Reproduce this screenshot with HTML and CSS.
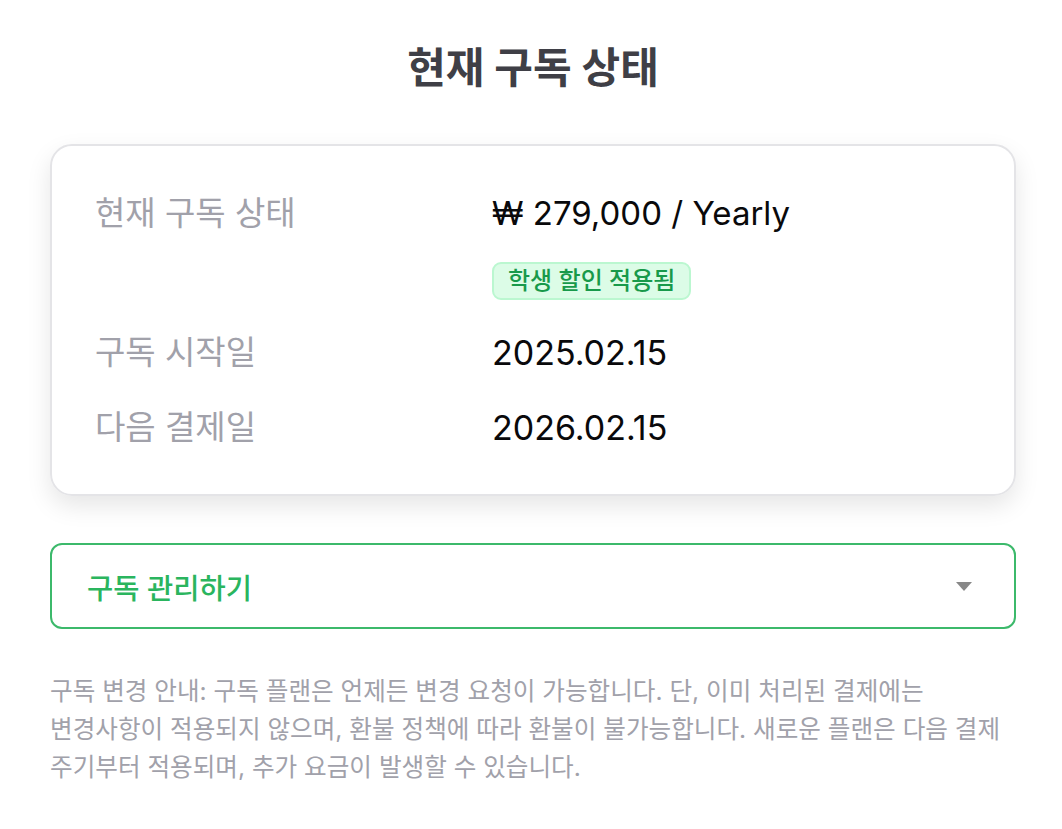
FILE: index.html
```html
<!DOCTYPE html>
<html lang="ko">
<head>
    <meta charset="UTF-8">
    <meta name="viewport" content="width=device-width, initial-scale=1.0">
    <title>현재 구독 상태</title>
    <link rel="stylesheet" href="styles.css">
</head>
<body>
    <div class="container">
        <h2>현재 구독 상태</h2>

        <div class="card">
            <div class="row">
                <div class="label">현재 구독 상태</div>
                <div class="value">
                    <div>₩ 279,000 / Yearly</div>
                    <span class="badge">학생 할인 적용됨</span>
                </div>
            </div>
            <div class="row">
                <div class="label">구독 시작일</div>
                <div class="value date">2025.02.15</div>
            </div>
            <div class="row">
                <div class="label">다음 결제일</div>
                <div class="value date">2026.02.15</div>
            </div>
        </div>

        <div class="manage">
            <span>구독 관리하기</span>
            <span class="arrow"></span>
        </div>

        <p class="notice">구독 변경 안내: 구독 플랜은 언제든 변경 요청이 가능합니다. 단, 이미 처리된 결제에는 변경사항이 적용되지 않으며, 환불 정책에 따라 환불이 불가능합니다. 새로운 플랜은 다음 결제 주기부터 적용되며, 추가 요금이 발생할 수 있습니다.</p>
    </div>
</body>
</html>
```

FILE: styles.css
```css
body {
    font-family: Inter, "Noto Sans CJK KR", sans-serif;
    background-color: #ffffff;
    color: #09090b;
    margin: 0;
    padding: 0;
}

.container {
    width: 966px;
    margin-left: 50px;
    padding: 43px 0 40px;
}

h2 {
    margin: 0 0 51px;
    text-align: center;
    font-size: 42px;
    font-weight: 700;
    line-height: 50px;
    color: #3f3f46;
}

.card {
    border: 2px solid #e4e4e7;
    border-radius: 22px;
    box-shadow: 0 10px 24px rgba(0, 0, 0, 0.1);
    padding: 45px 43px 44px;
    display: flex;
    flex-direction: column;
    gap: 30px;
}

.row {
    display: flex;
    font-size: 33px;
    line-height: 45px;
}

.label {
    width: 397px;
    color: #a1a1aa;
}

.value {
    display: flex;
    flex-direction: column;
    align-items: flex-start;
}

.date {
    font-size: 34px;
}

.badge {
    margin-top: 26px;
    padding: 0 14px;
    font-size: 24px;
    font-weight: 500;
    line-height: 34px;
    color: #18994a;
    background-color: #dcfce7;
    border: 2px solid #bbf7d0;
    border-radius: 9px;
}

.manage {
    margin-top: 47px;
    height: 82px;
    border: 2px solid #3cb96b;
    border-radius: 12px;
    padding: 0 42px 0 35px;
    display: flex;
    align-items: center;
    justify-content: space-between;
    font-size: 28.5px;
    font-weight: 500;
    color: #2ab55e;
}

.arrow {
    width: 0;
    height: 0;
    border-left: 8px solid transparent;
    border-right: 8px solid transparent;
    border-top: 9px solid #888888;
}

.notice {
    margin: 43px 0 0;
    font-size: 24.6px;
    line-height: 38px;
    color: #a1a1aa;
    word-break: keep-all;
}
```
